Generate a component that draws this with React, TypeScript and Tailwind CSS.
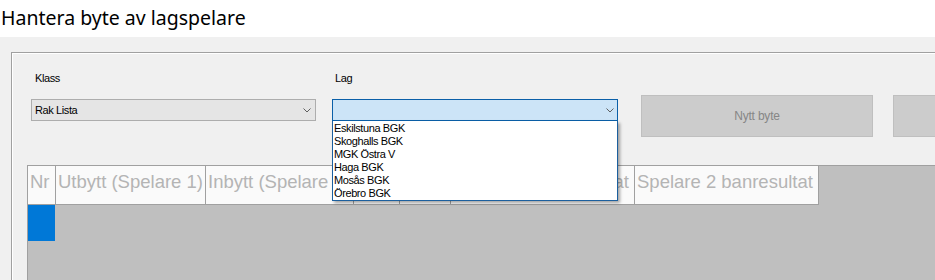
const teams = ["Eskilstuna BGK", "Skoghalls BGK", "MGK Östra V", "Haga BGK", "Mosås BGK", "Örebro BGK"];

const columns = [
  { title: "Nr", width: "w-[28px]" },
  { title: "Utbytt (Spelare 1)", width: "w-[150px]" },
  { title: "Inbytt (Spelare 2)", width: "w-[148px]" },
  { title: "", width: "w-[46px]" },
  { title: "", width: "w-[51px]" },
  { title: "Spelare 1 banresultat", width: "w-[184px]" },
  { title: "Spelare 2 banresultat", width: "w-[184px]" },
];

function Chevron() {
  return (
    <svg width="8" height="5" viewBox="0 0 8 5" className="shrink-0">
      <path d="M0.5 0.5 L4 4 L7.5 0.5" fill="none" stroke="#5f5f5f" strokeWidth="1" />
    </svg>
  );
}

export default function App() {
  return (
    <div className="h-[280px] w-[935px] overflow-hidden bg-[#f0f0f0] font-['Liberation_Sans',Arial,sans-serif]">
      {/* Title */}
      <div className="h-[37px] bg-white pl-px pt-[5px] font-['Noto_Sans',sans-serif] text-[19.5px] leading-[25px] text-[#000]">
        Hantera byte av lagspelare
      </div>

      {/* Group box */}
      <div className="ml-[11px] mt-[15px] w-[1000px] border-l border-t border-[#a0a0a0]">
        <div className="border-l border-t border-white">
          {/* Controls */}
          <div className="flex items-start pl-[18px] pt-[18px] text-[11px] leading-[13px] tracking-[-0.4px] text-black">
            <div className="flex flex-col">
              <span className="pl-[4px]">Klass</span>
              <div className="mt-[14px] flex h-[22px] w-[285px] items-center justify-between border border-[#adadad] bg-[#e5e5e5] pl-[3px] pr-[4px]">
                <span>Rak Lista</span>
                <Chevron />
              </div>
            </div>

            <div className="relative ml-[16px] flex flex-col">
              <span className="pl-[3px]">Lag</span>
              <div className="mt-[14px] flex h-[22px] w-[286px] items-center justify-end border border-[#0a5fa8] bg-[#cce4f7] pr-[3px]">
                <Chevron />
              </div>
              {/* Open list */}
              <div className="absolute left-0 top-[49px] z-10 w-[286px] border-x border-b border-[#1b5f9e] bg-white pl-px pt-px shadow-[2px_2px_3px_rgba(0,0,0,0.35)]">
                {teams.map((t) => (
                  <div key={t} className="h-[13px] leading-[13px]">
                    {t}
                  </div>
                ))}
              </div>
            </div>

            <button className="ml-[23px] mt-[23px] h-[42px] w-[232px] shrink-0 border border-[#bfbfbf] bg-[#cccccc] text-[12px] tracking-[-0.2px] text-[#868686]">
              Nytt byte
            </button>
            <button className="ml-[20px] mt-[23px] h-[42px] w-[232px] shrink-0 border border-[#bfbfbf] bg-[#cccccc]" />
          </div>

          {/* Grid */}
          <div className="ml-[14px] mt-[28px] h-[200px] border-l border-t border-[#a0a0a0] bg-[#bfbfbf]">
            <div className="flex">
              {columns.map((c, i) => (
                <div
                  key={i}
                  className={`${c.width} h-[39px] shrink-0 overflow-hidden whitespace-nowrap border-b border-r border-[#a0a0a0] bg-[#fafafa] pl-[2px] pt-[5px] text-[18.5px] leading-[21px] text-[#b4b4b4]`}
                >
                  {c.title}
                </div>
              ))}
            </div>
            <div className="h-[36px] w-[27px] bg-[#0078d7]" />
          </div>
        </div>
      </div>
    </div>
  );
}
